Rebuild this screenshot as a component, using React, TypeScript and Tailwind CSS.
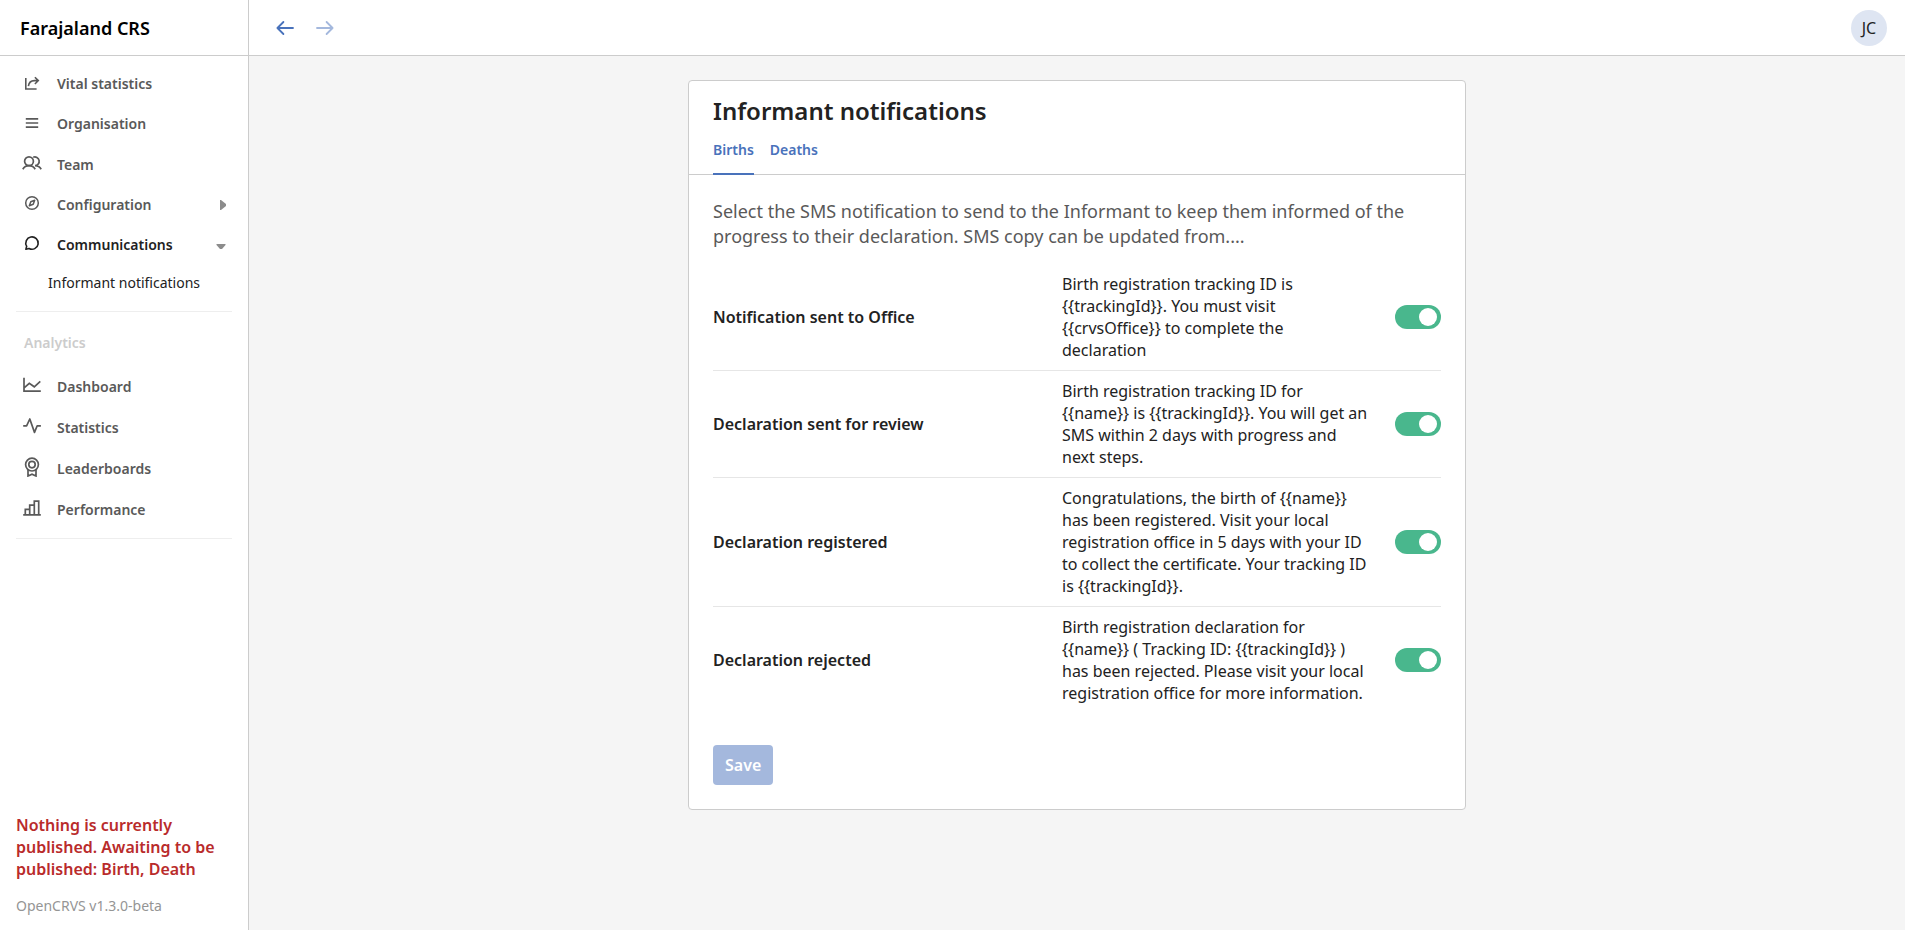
import type { ReactNode } from "react";

const stroke = {
  fill: "none",
  stroke: "currentColor",
  strokeLinecap: "round" as const,
  strokeLinejoin: "round" as const,
  "aria-hidden": true,
};

const ArrowIcon = ({ d }: { d: string }) => (
  <svg width="20" height="20" viewBox="0 0 20 20" {...stroke} strokeWidth="1.8">
    <path d={d} />
  </svg>
);
const ShareIcon = () => (
  <svg width="16" height="16" viewBox="0 0 16 16" {...stroke} strokeWidth="1.6" strokeLinecap="butt" strokeLinejoin="miter">
    <path d="M1.8 4V15H12.6M4.4 12.2C4.9 8.6 7.2 6.6 10.3 6.6H14M10.9 3.2L14.3 6.6L10.9 10" />
  </svg>
);
const ListIcon = () => (
  <svg width="16" height="16" viewBox="0 0 16 16" {...stroke} strokeWidth="1.7" strokeLinecap="butt">
    <path d="M1.8 4.8H14.2M1.8 9H14.2M1.8 13.2H14.2" />
  </svg>
);
const TeamIcon = () => (
  <svg width="20" height="16" viewBox="0 0 20 16" {...stroke} strokeWidth="1.7" strokeLinecap="butt">
    <circle cx="7" cy="6.3" r="4.4" />
    <path d="M0.8 14.2C2.1 12 4.4 10.7 7 10.7S11.9 12 13.2 14.2M11.2 2.2A4.4 4.4 0 1 1 13 10.7M13 10.7C15.6 10.7 17.9 12 19.2 14.2" />
  </svg>
);
const CompassIcon = () => (
  <svg width="16" height="16" viewBox="0 0 16 16" {...stroke} strokeWidth="1.5">
    <circle cx="8" cy="8" r="6.3" />
    <path d="M10.7 5.3L9.2 9.2L5.3 10.7L6.8 6.8Z" />
  </svg>
);
const BubbleIcon = () => (
  <svg width="16" height="16" viewBox="0 0 16 16" {...stroke} strokeWidth="1.6">
    <path d="M2.7 11.3A6.2 6.2 0 1 1 5 13.5L1.9 14.2Z" />
  </svg>
);
const LineChartIcon = () => (
  <svg width="20" height="20" viewBox="0 0 20 20" {...stroke} strokeWidth="1.7" strokeLinecap="butt" strokeLinejoin="miter">
    <path d="M2 2.8V16.2H18.8M2.4 12.6L7.3 8.3L12.3 11.8L18.3 6.4" />
  </svg>
);
const PulseIcon = () => (
  <svg width="20" height="20" viewBox="0 0 20 20" {...stroke} strokeWidth="1.7" strokeLinecap="butt">
    <path d="M1.2 9.8H4.6L7.8 3L12.5 16.4L15.2 9.8H18.9" />
  </svg>
);
const MedalIcon = () => (
  <svg width="20" height="20" viewBox="0 0 20 20" {...stroke} strokeWidth="1.7" strokeLinejoin="miter">
    <circle cx="10" cy="7.6" r="6.4" />
    <circle cx="10" cy="7.6" r="3.2" />
    <path d="M6 13V19L10 17.2L14 19V13" />
  </svg>
);
const BarsIcon = () => (
  <svg width="20" height="20" viewBox="0 0 20 20" {...stroke} strokeWidth="1.7" strokeLinecap="butt" strokeLinejoin="miter">
    <path d="M1.2 16.8H18.8M3.3 16.8V11.3H7.7M7.7 16.8V7.2H12.3M12.3 16.8V3.2H16.7V16.8" />
  </svg>
);

function NavItem({ icon, label, active, caret, tall }: {
  icon: ReactNode; label: string; active?: boolean; caret?: "right" | "down"; tall?: boolean;
}) {
  return (
    <li>
      <a
        href="#"
        className={`flex items-center gap-[9px] pr-[22px] pl-4 text-sm font-semibold ${tall ? "h-[41px]" : "h-10"} ${active ? "text-[#222222]" : "text-[#595959]"}`}
      >
        <span className="flex w-8 justify-center pb-1">{icon}</span>
        <span className="grow">{label}</span>
        {caret === "right" && (
          <svg width="6" height="10" viewBox="0 0 6 10" className="text-[#8c8c8c]" aria-hidden="true">
            <path d="M0 0H1L6 4V6L1 10H0Z" fill="currentColor" />
          </svg>
        )}
        {caret === "down" && (
          <svg width="10" height="10" viewBox="0 0 10 10" className="text-[#8c8c8c]" aria-hidden="true">
            <path d="M0.5 4H9.5V5L6 9H4L0.5 5Z" fill="currentColor" />
          </svg>
        )}
      </a>
    </li>
  );
}

const notifications = [
  { id: "office", name: "Notification sent to Office", text: "Birth registration tracking ID is {{trackingId}}. You must visit {{crvsOffice}} to complete the declaration" },
  { id: "review", name: "Declaration sent for review", text: "Birth registration tracking ID for {{name}} is {{trackingId}}. You will get an SMS within 2 days with progress and next steps." },
  { id: "registered", name: "Declaration registered", text: "Congratulations, the birth of {{name}} has been registered. Visit your local registration office in 5 days with your ID to collect the certificate. Your tracking ID is {{trackingId}}." },
  { id: "rejected", name: "Declaration rejected", text: "Birth registration declaration for {{name}} ( Tracking ID: {{trackingId}} ) has been rejected. Please visit your local registration office for more information." },
];

export default function App() {
  return (
    <div className="flex min-h-screen bg-[#f5f5f5] font-['Noto_Sans',sans-serif] text-[#222222]">
      <aside className="flex w-[249px] shrink-0 flex-col border-r border-[#cccccc] bg-white">
        <div className="flex h-14 items-center border-b border-[#cccccc] px-5 text-lg font-semibold text-black">
          Farajaland CRS
        </div>
        <nav className="pt-2">
          <ul>
            <NavItem icon={<ShareIcon />} label="Vital statistics" />
            <NavItem icon={<ListIcon />} label="Organisation" />
            <NavItem tall icon={<TeamIcon />} label="Team" />
            <NavItem icon={<CompassIcon />} label="Configuration" caret="right" />
            <NavItem icon={<BubbleIcon />} label="Communications" active caret="down" />
            <li>
              <a href="#" className="flex h-9 items-center pl-12 text-sm">Informant notifications</a>
            </li>
          </ul>
          <hr className="mx-4 mt-2.5 border-[#eeeeee]" />
          <h2 className="px-6 pt-[21px] pb-[13px] text-sm font-semibold text-[#cccccc]">Analytics</h2>
          <ul>
            <NavItem tall icon={<LineChartIcon />} label="Dashboard" />
            <NavItem tall icon={<PulseIcon />} label="Statistics" />
            <NavItem tall icon={<MedalIcon />} label="Leaderboards" />
            <NavItem tall icon={<BarsIcon />} label="Performance" />
          </ul>
          <hr className="mx-4 mt-2 border-[#eeeeee]" />
        </nav>
        <div className="mt-auto px-4 pb-3.5">
          <p className="text-base leading-[22px] font-semibold text-[#b92b2b]">
            Nothing is currently published. Awaiting to be published: Birth, Death
          </p>
          <p className="mt-4 text-sm text-[#959595]">OpenCRVS v1.3.0-beta</p>
        </div>
      </aside>

      <div className="flex min-w-0 grow flex-col">
        <header className="flex h-14 items-center border-b border-[#cccccc] bg-white px-[18px]">
          <button type="button" aria-label="Back" className="flex size-9 items-center justify-center text-[#4972bb]">
            <ArrowIcon d="M18 10H2.4M8.4 4L2.4 10L8.4 16" />
          </button>
          <button type="button" aria-label="Forward" disabled className="ml-1 flex size-9 items-center justify-center text-[#a4b8dd]">
            <ArrowIcon d="M2 10H17.6M11.6 4L17.6 10L11.6 16" />
          </button>
          <button type="button" className="ml-auto flex size-9 items-center justify-center rounded-full bg-[#dee5f2] text-base">
            JC
          </button>
        </header>

        <main className="grow px-6 py-6">
          <section className="mx-auto w-full max-w-[778px] rounded border border-[#cccccc] bg-white">
            <div className="border-b border-[#cccccc] px-6 pt-3">
              <h1 className="text-2xl leading-9 font-semibold">Informant notifications</h1>
              <div role="tablist" className="mt-2 -mb-px flex gap-4 text-sm font-semibold text-[#4972bb]">
                <button type="button" role="tab" aria-selected="true" className="h-[38px] border-b-2 border-[#4972bb] pb-2.5">Births</button>
                <button type="button" role="tab" aria-selected="false" className="h-[38px] border-b-2 border-transparent pb-2.5">Deaths</button>
              </div>
            </div>
            <div className="p-6">
              <p className="text-lg leading-[25px] text-[#595959]">
                Select the SMS notification to send to the Informant to keep them informed of the progress to their declaration. SMS copy can be updated from....
              </p>
              <ul className="mt-[15px] divide-y divide-[#e6e6e6]">
                {notifications.map((n) => (
                  <li key={n.id} className="flex items-center py-[9px] text-base leading-[22px]">
                    <label htmlFor={n.id} className="w-[349px] shrink-0 font-semibold">{n.name}</label>
                    <p className="w-[309px] shrink-0">{n.text}</p>
                    <input
                      id={n.id}
                      type="checkbox"
                      role="switch"
                      defaultChecked
                      className="ml-auto flex h-6 w-[46px] shrink-0 appearance-none items-center rounded-full bg-[#cccccc] px-1 before:size-[18px] before:rounded-full before:bg-white checked:justify-end checked:bg-[#49b78d]"
                    />
                  </li>
                ))}
              </ul>
              <button type="button" disabled className="mt-8 h-10 rounded bg-[#a4b8dd] px-3 text-base font-semibold text-white">
                Save
              </button>
            </div>
          </section>
        </main>
      </div>
    </div>
  );
}
